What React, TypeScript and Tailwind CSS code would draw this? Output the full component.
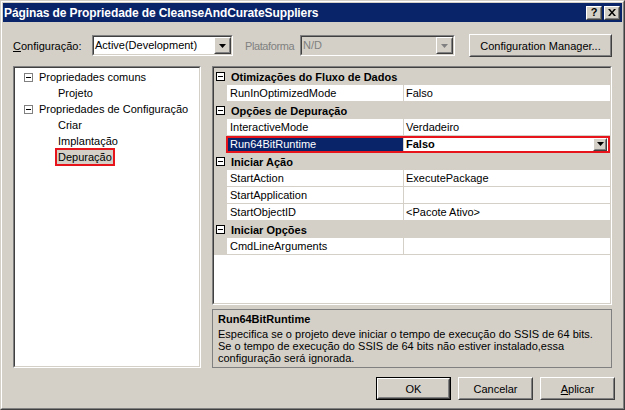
import type { ReactNode } from "react";

// Classic Win2000 property pages dialog

const RAISED_OUT = "border border-t-white border-l-white border-r-[#404040] border-b-[#404040]";
const RAISED_IN = "border border-t-[#d4d0c8] border-l-[#d4d0c8] border-r-[#808080] border-b-[#808080]";
const SUNK_OUT = "border border-t-[#808080] border-l-[#808080] border-r-white border-b-white";
const SUNK_IN = "border border-t-[#404040] border-l-[#404040] border-r-[#d4d0c8] border-b-[#d4d0c8]";

function Arrow({ color = "#000" }: { color?: string }) {
  return (
    <svg width="7" height="4" viewBox="0 0 7 4">
      <path d="M0 0h7L3.5 4z" fill={color} />
    </svg>
  );
}

function DropButton({ disabled, className = "" }: { disabled?: boolean; className?: string }) {
  return (
    <div className={`${RAISED_OUT} bg-[#d4d0c8] ${className}`}>
      <div className={`${RAISED_IN} h-full flex items-center justify-center`}>
        <Arrow color={disabled ? "#808080" : "#000"} />
      </div>
    </div>
  );
}

function Button({ children, isDefault, className = "" }: { children: ReactNode; isDefault?: boolean; className?: string }) {
  return (
    <div className={`${isDefault ? "border border-black" : ""} ${className}`}>
      <div className={`${RAISED_OUT} h-full`}>
        <div className={`${RAISED_IN} h-full flex items-center justify-center bg-[#d4d0c8]`}>{children}</div>
      </div>
    </div>
  );
}

function Combo({ value, disabled, className = "" }: { value: string; disabled?: boolean; className?: string }) {
  return (
    <div className={`${SUNK_OUT} h-[21px] ${className}`}>
      <div className={`${SUNK_IN} h-full flex items-center ${disabled ? "bg-[#d4d0c8] text-[#808080]" : "bg-white"}`}>
        <span className="flex-1 pl-[1px] leading-none">{value}</span>
        <DropButton disabled={disabled} className="w-[17px] h-[17px]" />
      </div>
    </div>
  );
}

function Minus({ border }: { border: string }) {
  return (
    <div className={`w-[9px] h-[9px] border ${border} bg-white flex items-center justify-center`}>
      <div className="w-[5px] h-px bg-black" />
    </div>
  );
}

function TreeRow({ children, level }: { children: ReactNode; level: 0 | 1 }) {
  return (
    <div className={`h-[16px] flex items-center whitespace-nowrap ${level === 0 ? "pl-[9px]" : "pl-[43px]"}`}>
      {level === 0 && (
        <div className="mr-[6px]">
          <Minus border="border-[#808080]" />
        </div>
      )}
      {children}
    </div>
  );
}

function Category({ label }: { label: string }) {
  return (
    <div className="h-[17px] flex items-center bg-[#d4d0c8]">
      <div className="w-[13px] flex justify-center">
        <Minus border="border-black" />
      </div>
      <span className="pl-[4px] font-bold">{label}</span>
    </div>
  );
}

function Prop({ name, value, selected }: { name: string; value?: string; selected?: boolean }) {
  return (
    <div className="relative h-[17px] flex">
      <div className="w-[13px] bg-[#d4d0c8]" />
      <div
        className={`w-[177px] flex items-center pl-[3px] border-b border-r border-[#d4d0c8] ${
          selected ? "bg-[#0a246a] text-white" : "bg-white"
        }`}
      >
        {name}
      </div>
      <div className="flex-1 flex items-center pl-[2px] border-b border-[#d4d0c8] bg-white">
        <span className={`flex-1 ${selected ? "font-bold" : ""}`}>{value}</span>
        {selected && <DropButton className="w-[14px] h-[13px] mr-[3px]" />}
      </div>
      {selected && <div className="absolute left-[12px] right-0 top-0 bottom-0 border-2 border-[#e8141c] pointer-events-none" />}
    </div>
  );
}

export default function App() {
  return (
    <div className="w-[625px] h-[410px] font-['Liberation_Sans',Arial,sans-serif] text-[11px] leading-[14px] text-black">
      <div className="h-full border border-t-[#d4d0c8] border-l-[#d4d0c8] border-r-[#404040] border-b-[#404040]">
        <div className="h-full border border-t-white border-l-white border-r-[#808080] border-b-[#808080] bg-[#d4d0c8] p-px flex flex-col">
          {/* title bar */}
          <div className="h-[19px] bg-[#0a246a] flex items-center pl-[1px] pr-[2px]">
            <span className="flex-1 text-white font-bold text-[12px] tracking-[-0.1px]">
              Páginas de Propriedade de CleanseAndCurateSuppliers
            </span>
            <Button className="w-[16px] h-[14px]">
              <span className="font-bold text-[11px] leading-none">?</span>
            </Button>
            <Button className="w-[16px] h-[14px] ml-[2px]">
              <svg width="8" height="7" viewBox="0 0 8 7">
                <path d="M0 0h2l2 2.5L6 0h2L5 3.5 8 7H6L4 4.5 2 7H0l3-3.5z" fill="#000" />
              </svg>
            </Button>
          </div>

          <div className="flex flex-col px-[10px] pt-[12px]">
            {/* configuration row */}
            <div className="h-[23px] flex items-center">
              <span className="w-[79px]">
                <span className="underline">C</span>onfiguração:
              </span>
              <Combo value="Active(Development)" className="w-[141px]" />
              <span className="ml-[12px] w-[55px] text-[#808080] tracking-[-0.4px]">Plataforma</span>
              <Combo value="N/D" disabled className="w-[155px]" />
              <Button className="ml-auto w-[143px] h-[23px]">Configuration Manager...</Button>
            </div>

            {/* panels */}
            <div className="mt-[9px] h-[302px] flex gap-[11px]">
              <div className={`${SUNK_OUT} w-[188px]`}>
                <div className={`${SUNK_IN} h-full bg-white pt-px`}>
                  <TreeRow level={0}>Propriedades comuns</TreeRow>
                  <TreeRow level={1}>Projeto</TreeRow>
                  <TreeRow level={0}>Propriedades de Configuração</TreeRow>
                  <TreeRow level={1}>Criar</TreeRow>
                  <TreeRow level={1}>Implantação</TreeRow>
                  <TreeRow level={1}>
                    <span className="-ml-[3px] px-px bg-[#d4d0c8] border-2 border-[#e8141c]">Depuração</span>
                  </TreeRow>
                </div>
              </div>

              <div className="flex-1 flex flex-col gap-[4px]">
                <div className={`${SUNK_OUT} h-[239px]`}>
                  <div className={`${SUNK_IN} h-full bg-white`}>
                    <Category label="Otimizações do Fluxo de Dados" />
                    <Prop name="RunInOptimizedMode" value="Falso" />
                    <Category label="Opções de Depuração" />
                    <Prop name="InteractiveMode" value="Verdadeiro" />
                    <Prop name="Run64BitRuntime" value="Falso" selected />
                    <Category label="Iniciar Ação" />
                    <Prop name="StartAction" value="ExecutePackage" />
                    <Prop name="StartApplication" />
                    <Prop name="StartObjectID" value="<Pacote Ativo>" />
                    <Category label="Iniciar Opções" />
                    <Prop name="CmdLineArguments" />
                  </div>
                </div>
                <div className="flex-1 border border-[#808080] px-[5px] pt-[2px]">
                  <div className="font-bold">Run64BitRuntime</div>
                  <div className="mt-[2px] leading-[12px]">
                    Especifica se o projeto deve iniciar o tempo de execução do SSIS de 64 bits.
                    <br />
                    Se o tempo de execução do SSIS de 64 bits não estiver instalado,essa
                    <br />
                    configuração será ignorada.
                  </div>
                </div>
              </div>
            </div>

            {/* buttons */}
            <div className="mt-[9px] -mr-[3px] flex justify-end gap-[7px]">
              <Button isDefault className="w-[75px] h-[23px]">OK</Button>
              <Button className="w-[75px] h-[23px]">Cancelar</Button>
              <Button className="w-[75px] h-[23px]">
                <span>
                  <span className="underline">A</span>plicar
                </span>
              </Button>
            </div>
          </div>
        </div>
      </div>
    </div>
  );
}
